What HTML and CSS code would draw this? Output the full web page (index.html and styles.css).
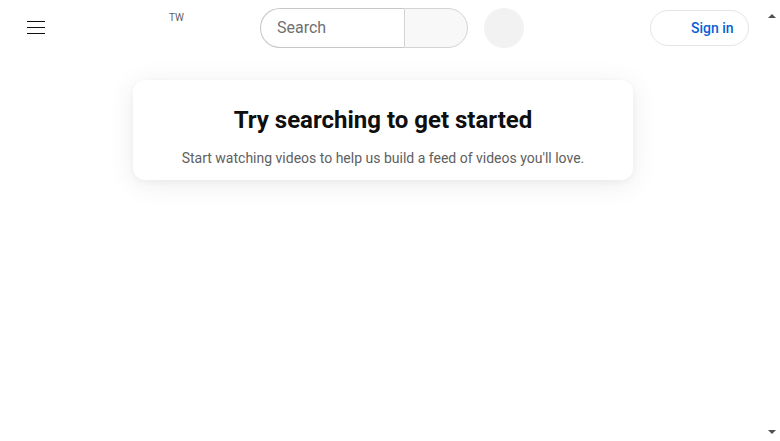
FILE: index.html
```html
<!DOCTYPE html>
<html>
<head>
<meta charset="utf-8">
<link rel="stylesheet" href="styles.css">
</head>
<body>
<header class="masthead">
  <div class="start">
    <button class="menu-btn" aria-label="Guide">
      <svg width="18" height="14" viewBox="0 0 18 14"><path d="M0 0.5h18M0 6.5h18M0 12.5h18" stroke="#0f0f0f" stroke-width="1"/></svg>
    </button>
    <div class="logo"><span class="country">TW</span></div>
  </div>
  <div class="center">
    <div class="search">
      <div class="search-input">Search</div>
      <div class="search-btn"></div>
    </div>
    <div class="voice"></div>
  </div>
  <div class="end">
    <div class="signin"><span class="signin-icon"></span>Sign in</div>
  </div>
</header>
<main class="content">
  <div class="card">
    <h1 class="title">Try searching to get started</h1>
    <p class="sub">Start watching videos to help us build a feed of videos you'll love.</p>
  </div>
</main>
<div class="arrow-up"></div>
<div class="arrow-down"></div>
</body>
</html>
```

FILE: styles.css
```css
html, body {
  margin: 0;
  padding: 0;
  background: #fff;
  font-family: Roboto, "Liberation Sans", Arial, sans-serif;
  width: 780px;
  height: 441px;
  overflow: hidden;
}
.masthead {
  height: 56px;
  display: flex;
  align-items: center;
  padding: 0 16px;
  box-sizing: border-box;
}
.start {
  display: flex;
  align-items: center;
  width: 220px;
  height: 56px;
}
.menu-btn {
  width: 40px;
  height: 40px;
  border: none;
  background: none;
  padding: 0;
  display: flex;
  align-items: center;
  justify-content: center;
}
.menu-btn svg {
  display: block;
}
.logo {
  width: 130px;
  height: 56px;
  display: flex;
  justify-content: flex-end;
  padding-left: 16px;
  box-sizing: border-box;
}
.country {
  font-size: 10px;
  color: #606060;
  margin-top: 12px;
  margin-right: 2px;
}
.center {
  display: flex;
  align-items: center;
  margin-left: 24px;
}
.search {
  display: flex;
  height: 40px;
}
.search-input {
  width: 144px;
  box-sizing: border-box;
  border: 1px solid #c6c6c6;
  border-right: none;
  border-radius: 20px 0 0 20px;
  padding-left: 16px;
  font-size: 16px;
  line-height: 38px;
  color: #707070;
}
.search-btn {
  width: 64px;
  box-sizing: border-box;
  border: 1px solid #d3d3d3;
  background: #f8f8f8;
  border-radius: 0 20px 20px 0;
}
.voice {
  width: 40px;
  height: 40px;
  border-radius: 50%;
  background: #f2f2f2;
  margin-left: 16px;
}
.end {
  display: flex;
  align-items: center;
  margin-left: auto;
  margin-right: 15px;
}
.signin {
  height: 36px;
  width: 99px;
  box-sizing: border-box;
  border: 1px solid #e5e5e5;
  border-radius: 18px;
  display: flex;
  align-items: center;
  padding-left: 15px;
  color: #065fd4;
  font-size: 14px;
  font-weight: 500;
}
.signin-icon {
  width: 24px;
  height: 24px;
  margin-right: 1px;
}
.content {
  display: flex;
  justify-content: center;
  padding-top: 24px;
  padding-right: 14px;
}
.card {
  width: 500px;
  height: 100px;
  box-sizing: border-box;
  border-radius: 12px;
  background: #fff;
  box-shadow: 0 4px 28px rgba(0,0,0,0.08), 0 2px 6px rgba(0,0,0,0.04);
  text-align: center;
  padding-top: 24px;
}
.title {
  margin: 0;
  font-size: 24px;
  line-height: 32px;
  font-weight: 700;
  color: #0f0f0f;
}
.sub {
  margin: 12px 0 0;
  font-size: 14px;
  line-height: 20px;
  color: #606060;
}
.arrow-up, .arrow-down {
  position: absolute;
  right: 4px;
  width: 0;
  height: 0;
  border-left: 4px solid transparent;
  border-right: 4px solid transparent;
}
.arrow-up {
  top: 14px;
  border-bottom: 4px solid #505050;
}
.arrow-down {
  top: 430px;
  border-top: 4px solid #505050;
}
```
